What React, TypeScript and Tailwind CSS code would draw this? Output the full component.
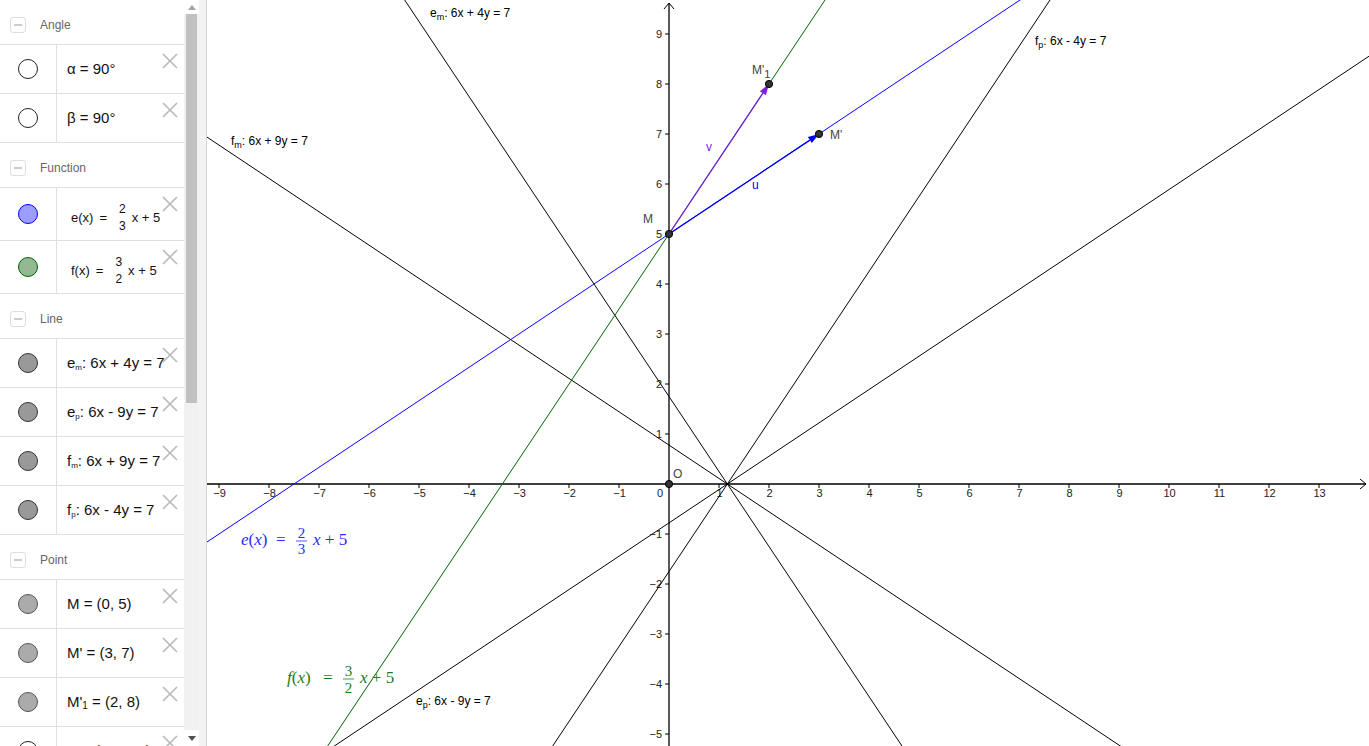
import React from "react";

// graphics view: origin and unit size in page pixels
const OX = 669;
const OY = 484;
const UNIT = 50;
const px = (x: number) => OX + UNIT * x;
const py = (y: number) => OY - UNIT * y;

const SANS = "Liberation Sans, Arial, sans-serif";
const SERIF = "Liberation Serif, Times New Roman, serif";

function CloseIcon() {
  return (
    <svg className="absolute left-[162px] top-[8px]" width="16" height="16" viewBox="0 0 16 16">
      <path d="M1 1 L15 15 M15 1 L1 15" stroke="#b8b8b8" strokeWidth="1.6" fill="none" />
    </svg>
  );
}

function Header({ label, first }: { label: string; first?: boolean }) {
  return (
    <div
      className={
        "flex items-center shrink-0 pt-[5px] " +
        (first ? "h-[44px]" : "h-[45px] border-t border-[#e0e0e0]")
      }
    >
      <div className="ml-[10px] w-[16px] h-[16px] border border-[#dddddd] rounded-[3px] flex items-center justify-center">
        <div className="w-[8px] h-[2px] bg-[#cccccc]" />
      </div>
      <span className="ml-[14px] text-[12px] text-[#666666]">{label}</span>
    </div>
  );
}

function Row({
  marble,
  tall,
  children,
}: {
  marble: string;
  tall?: boolean;
  children: React.ReactNode;
}) {
  return (
    <div
      className={
        "relative flex shrink-0 border-t border-[#e0e0e0] " + (tall ? "h-[53px]" : "h-[49px]")
      }
    >
      <div className="w-[57px] shrink-0 border-r border-[#e0e0e0] flex items-center justify-center">
        <div className={"w-[20px] h-[20px] rounded-full border " + marble} />
      </div>
      <div className="flex items-center pl-[10px] text-[15px] text-[#111111] whitespace-nowrap">
        {children}
      </div>
      <CloseIcon />
    </div>
  );
}

function Frac({ n, d }: { n: string; d: string }) {
  return (
    <span className="inline-flex flex-col items-center text-[12px] leading-[17px] mx-[6px]">
      <span>{n}</span>
      <span>{d}</span>
    </span>
  );
}

function AlgebraView() {
  const white = "bg-white border-[#222222]";
  const gray = "bg-[#999999] border-[#333333]";
  const pt = "bg-[#ababab] border-[#555555]";
  return (
    <div className="flex h-full shrink-0">
      <div className="w-[184px] h-full overflow-hidden flex flex-col">
        <Header label="Angle" first />
        <Row marble={white}>α = 90°</Row>
        <Row marble={white}>β = 90°</Row>
        <Header label="Function" />
        <Row marble="bg-[#9d9dff] border-[#0000ff]" tall>
          <span className="flex items-center pt-[8px] pl-[4px] text-[13px]">
            e(x)<span className="mx-[6px]">=</span>
            <Frac n="2" d="3" />x + 5
          </span>
        </Row>
        <Row marble="bg-[#93b893] border-[#006400]" tall>
          <span className="flex items-center pt-[8px] pl-[4px] text-[13px]">
            f(x)<span className="mx-[6px]">=</span>
            <Frac n="3" d="2" />x + 5
          </span>
        </Row>
        <Header label="Line" />
        <Row marble={gray}>
          <span>
            e<sub className="text-[8px]">m</sub>: 6x + 4y = 7
          </span>
        </Row>
        <Row marble={gray}>
          <span>
            e<sub className="text-[8px]">p</sub>: 6x - 9y = 7
          </span>
        </Row>
        <Row marble={gray}>
          <span>
            f<sub className="text-[8px]">m</sub>: 6x + 9y = 7
          </span>
        </Row>
        <Row marble={gray}>
          <span>
            f<sub className="text-[8px]">p</sub>: 6x - 4y = 7
          </span>
        </Row>
        <Header label="Point" />
        <Row marble={pt}>M = (0, 5)</Row>
        <Row marble={pt}>M' = (3, 7)</Row>
        <Row marble={pt}>
          <span>
            M'<sub className="text-[10px]">1</sub> = (2, 8)
          </span>
        </Row>
        <Row marble={white}>N = (1.17, 0)</Row>
      </div>
      {/* scrollbar */}
      <div className="w-[15px] h-full flex flex-col bg-[#f1f1f1]">
        <div className="h-[14px] flex items-center justify-center bg-white">
          <div className="w-0 h-0 border-l-[4px] border-r-[4px] border-b-[5px] border-l-transparent border-r-transparent border-b-[#a3a3a3]" />
        </div>
        <div className="h-[389px] mx-[2px] bg-[#c1c1c1]" />
        <div className="flex-1" />
        <div className="h-[16px] flex items-center justify-center bg-white">
          <div className="w-0 h-0 border-l-[4px] border-r-[4px] border-t-[5px] border-l-transparent border-r-transparent border-t-[#505050]" />
        </div>
      </div>
      <div className="w-[8px] h-full bg-[#f3f3f3] border-r border-[#d6d6d6]" />
    </div>
  );
}

function arrowHead(x1: number, y1: number, x2: number, y2: number, len = 11, half = 3.6) {
  const dx = x2 - x1;
  const dy = y2 - y1;
  const L = Math.hypot(dx, dy);
  const ux = dx / L;
  const uy = dy / L;
  const bx = x2 - ux * len;
  const by = y2 - uy * len;
  return {
    pts: `${x2},${y2} ${bx - uy * half},${by + ux * half} ${bx + uy * half},${by - ux * half}`,
    bx,
    by,
  };
}

function FnLine({ f, color, w = 1 }: { f: (x: number) => number; color: string; w?: number }) {
  return (
    <line
      x1={px(-12)}
      y1={py(f(-12))}
      x2={px(16)}
      y2={py(f(16))}
      stroke={color}
      strokeWidth={w}
    />
  );
}

function Vector({ x, y, color }: { x: number; y: number; color: string }) {
  const x1 = px(0);
  const y1 = py(5);
  const x2 = px(x);
  const y2 = py(y);
  const a = arrowHead(x1, y1, x2, y2);
  return (
    <g>
      <line x1={x1} y1={y1} x2={a.bx} y2={a.by} stroke={color} strokeWidth={1.3} />
      <polygon points={a.pts} fill={color} />
    </g>
  );
}

function Pt({ x, y }: { x: number; y: number }) {
  return <circle cx={px(x)} cy={py(y)} r={3.6} fill="#333333" stroke="#000000" strokeWidth={1} />;
}

function GraphicsView() {
  const xt: number[] = [];
  for (let k = -9; k <= 13; k++) if (k !== 0) xt.push(k);
  const yt: number[] = [];
  for (let k = -5; k <= 9; k++) if (k !== 0) yt.push(k);
  const fmt = (k: number) => (k < 0 ? "\u2212" + Math.abs(k) : String(k));

  return (
    <div className="relative flex-1 h-full overflow-hidden bg-white">
      <svg width="1162" height="746" viewBox="207 0 1162 746" className="block">
        {/* axes */}
        <line x1={207} y1={OY} x2={1366} y2={OY} stroke="#000" strokeWidth={1.3} />
        <path d="M1360 479 L1366 484 L1360 489" stroke="#000" strokeWidth={1} fill="none" />
        <line x1={OX} y1={746} x2={OX} y2={3} stroke="#000" strokeWidth={1.3} />
        <path d="M664 9 L669 3 L674 9" stroke="#000" strokeWidth={1} fill="none" />
        {xt.map((k) => (
          <g key={"x" + k}>
            <line x1={px(k)} y1={OY} x2={px(k)} y2={OY + 4} stroke="#000" strokeWidth={1} />
            <text x={px(k) + 0.5} y={OY + 13} fontSize={11} fill="#222" textAnchor="middle" fontFamily={SANS}>
              {fmt(k)}
            </text>
          </g>
        ))}
        {yt.map((k) => (
          <g key={"y" + k}>
            <line x1={OX - 4} y1={py(k)} x2={OX} y2={py(k)} stroke="#000" strokeWidth={1} />
            <text x={OX - 7} y={py(k) + 4} fontSize={11} fill="#222" textAnchor="end" fontFamily={SANS}>
              {fmt(k)}
            </text>
          </g>
        ))}
        <text x={663} y={OY + 13} fontSize={11} fill="#222" textAnchor="end" fontFamily={SANS}>
          0
        </text>

        {/* lines */}
        <FnLine f={(x) => (7 - 6 * x) / 4} color="#000" />
        <FnLine f={(x) => (6 * x - 7) / 9} color="#000" />
        <FnLine f={(x) => (7 - 6 * x) / 9} color="#000" />
        <FnLine f={(x) => (6 * x - 7) / 4} color="#000" />
        <FnLine f={(x) => (2 / 3) * x + 5} color="#0000ff" />
        <FnLine f={(x) => 1.5 * x + 5} color="#006400" />

        {/* vectors */}
        <Vector x={3} y={7} color="#0000ff" />
        <Vector x={2} y={8} color="#7b1fe0" />

        {/* points */}
        <Pt x={0} y={0} />
        <Pt x={0} y={5} />
        <Pt x={3} y={7} />
        <Pt x={2} y={8} />

        {/* point and vector labels */}
        <g fontFamily={SANS} fontSize={12} fill="#444">
          <text x={643} y={223}>M</text>
          <text x={830} y={139}>M'</text>
          <text x={752} y={74}>
            M'<tspan fontSize={11} dy={4}>1</tspan>
          </text>
          <text x={673} y={478}>O</text>
        </g>
        <text x={706} y={151} fontFamily={SANS} fontSize={12} fill="#7b1fe0">
          v
        </text>
        <text x={752} y={189} fontFamily={SANS} fontSize={12} fill="#0000ff">
          u
        </text>

        {/* line labels */}
        <g fontFamily={SANS} fontSize={12} fill="#000">
          <text x={430} y={17}>
            e<tspan fontSize={9} dy={3}>m</tspan>
            <tspan dy={-3}>: 6x + 4y = 7</tspan>
          </text>
          <text x={1035} y={45}>
            f<tspan fontSize={9} dy={3}>p</tspan>
            <tspan dy={-3}>: 6x - 4y = 7</tspan>
          </text>
          <text x={231} y={145}>
            f<tspan fontSize={9} dy={3}>m</tspan>
            <tspan dy={-3}>: 6x + 9y = 7</tspan>
          </text>
          <text x={416} y={705}>
            e<tspan fontSize={9} dy={3}>p</tspan>
            <tspan dy={-3}>: 6x - 9y = 7</tspan>
          </text>
        </g>

        {/* function labels */}
        <g fontFamily={SERIF} fill="#2b2bff">
          <text x={241} y={545} fontSize={17}>
            <tspan fontStyle="italic">e</tspan>(<tspan fontStyle="italic">x</tspan>)
          </text>
          <text x={276} y={545} fontSize={17}>
            =
          </text>
          <text x={301.5} y={538} fontSize={15} textAnchor="middle">
            2
          </text>
          <line x1={296} y1={541} x2={307} y2={541} stroke="#2b2bff" strokeWidth={0.8} />
          <text x={301.5} y={554} fontSize={15} textAnchor="middle">
            3
          </text>
          <text x={313} y={545} fontSize={17}>
            <tspan fontStyle="italic">x</tspan> + 5
          </text>
        </g>
        <g fontFamily={SERIF} fill="#1f7a1f">
          <text x={287} y={683} fontSize={17}>
            <tspan fontStyle="italic">f</tspan>(<tspan fontStyle="italic">x</tspan>)
          </text>
          <text x={323} y={683} fontSize={17}>
            =
          </text>
          <text x={348.5} y={676} fontSize={15} textAnchor="middle">
            3
          </text>
          <line x1={343} y1={679} x2={354} y2={679} stroke="#1f7a1f" strokeWidth={0.8} />
          <text x={348.5} y={693} fontSize={15} textAnchor="middle">
            2
          </text>
          <text x={360} y={683} fontSize={17}>
            <tspan fontStyle="italic">x</tspan> + 5
          </text>
        </g>
      </svg>
    </div>
  );
}

export default function App() {
  return (
    <div
      className="flex w-[1369px] h-[746px] overflow-hidden bg-white"
      style={{ fontFamily: SANS }}
    >
      <AlgebraView />
      <GraphicsView />
    </div>
  );
}
